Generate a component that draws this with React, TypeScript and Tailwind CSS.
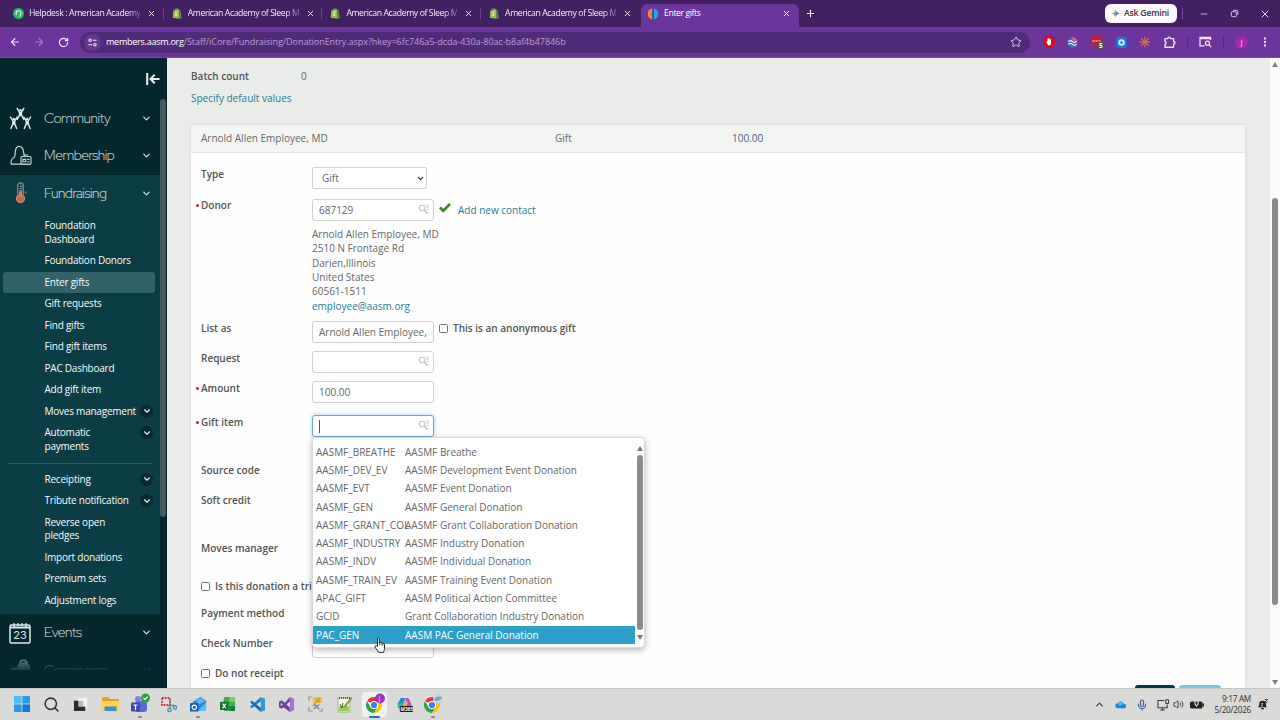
import React from "react";
import {
  ArrowLeft, ArrowRight, RotateCw, X, Plus, Minus, Star, ChevronDown, ChevronUp,
  Mic, Volume2, EllipsisVertical, Search,
} from "lucide-react";

function Shopify() {
  return (
    <svg viewBox="0 0 12 12" className="size-[11px] shrink-0">
      <path d="M1.5 2.6 7.4 1l1 10.600L.8 10.500z" fill="#95bf47" />
      <path d="M7.4 1.2 9.2 2.600l1.600 8.300-2.400.7z" fill="#5e8e3e" />
      <path d="M3.2 2.4C3.6.8 4.6.2 5.4.5c.6.2.8.9.8 1.6" fill="none" stroke="#b9d98a" strokeWidth=".7" />
      <path d="M6.2 4.300c-1.500-.7-2.600 0-2.400 1 .2.9 1.700.9 1.600 2-.1 1-1.300 1-2.200.3" fill="none" stroke="#fff" strokeWidth="1" />
    </svg>
  );
}

function TabTitle({ children }: { children: React.ReactNode }) {
  return (
    <span className="ml-[5px] w-[111px] whitespace-nowrap text-[8.700px] tracking-[-0.4px] text-[#f4edf9] [mask-image:linear-gradient(90deg,#000_88%,rgba(0,0,0,0.3))]">{children}</span>
  );
}

function Tab({ icon, title, last }: { icon: React.ReactNode; title: string; last?: boolean }) {
  return (
    <div className={last ? "flex h-[11px] w-[160px] shrink-0 items-center pl-[8px]" : "flex h-[11px] w-[158.700px] shrink-0 items-center border-r border-[#6b3f92] pl-[8px]"}>
      {icon}
      <TabTitle>{title}</TabTitle>
      <X className="ml-[7px] size-[9px] text-[#efe6f7]" strokeWidth={2.6} />
    </div>
  );
}

function TabStrip() {
  return (
    <div className="flex h-[27px] shrink-0 items-center bg-[#43205f] pl-[5px] text-[10px]">
      <Tab
        icon={
          <svg viewBox="0 0 12 12" className="size-[11px] shrink-0">
            <circle cx="6" cy="6" r="6" fill="#2eb85c" />
            <path d="M3.300 6.500V5.700a2.700 2.700 0 0 1 5.400 0v.8M3.600 5.800v1.800M8.400 5.800v1.800c0 1-1 1.300-2 1.300" fill="none" stroke="#d8ffe3" strokeWidth="1.200" />
          </svg>
        }
        title="Helpdesk : American Academy"
      />
      <Tab icon={<Shopify />} title="American Academy of Sleep M" />
      <Tab icon={<Shopify />} title="American Academy of Sleep M" />
      <Tab icon={<Shopify />} title="American Academy of Sleep M" last />
      <div className="flex h-[23px] w-[158px] shrink-0 items-center self-end rounded-t-[6px] bg-[#6b359b] pb-[4px] pl-[6px]">
        <svg viewBox="0 0 12 12" className="size-[12px]">
          <path d="M5.200.6a5.500 5.500 0 0 0 0 10.800z" fill="#f08a32" />
          <path d="M5.200.6a8 8 0 0 1 0 10.800z" fill="#c9472c" opacity=".6" />
          <path d="M6.800.6a5.500 5.500 0 0 1 0 10.800z" fill="#2aa4e0" />
          <path d="M6.800.6a8 8 0 0 0 0 10.800z" fill="#1b5fae" />
        </svg>
        <span className="ml-[5px] flex-1 text-[8.700px] tracking-[-0.42px] text-white">Enter gifts</span>
        <X className="mr-[8px] size-[9px] text-white" strokeWidth={2.6} />
      </div>
      <Plus className="ml-[6px] size-[11px] text-white" strokeWidth={2.4} />
      <div className="flex-1" />
      <div className="flex h-[19px] w-[72px] items-center rounded-[6px] bg-[#fdf9fe] pl-[6px]">
        <svg viewBox="0 0 10 10" className="size-[9px]">
          <path d="M5 0Q5.500 4.500 10 5L5 5z" fill="#ea5a4b" />
          <path d="M5 0Q5.500 4.500 10 5 5.500 5.500 5 10z" fill="#3d7ff0" />
          <path d="M5 0Q4.500 4.500 0 5h5z" fill="#e6a43a" />
          <path d="M5 10Q4.500 5.500 0 5h5z" fill="#3fae68" />
        </svg>
        <span className="ml-[4px] whitespace-nowrap text-[8.700px] font-semibold tracking-[-0.22px] text-[#3a3340]">Ask Gemini</span>
      </div>
      <div className="ml-[5px] h-[11px] w-px bg-[#7443a0]" />
      <div className="flex w-[97px] items-center">
        <Minus className="ml-[16px] size-[10px] text-[#d8c8e6]" strokeWidth={2} />
        <svg viewBox="0 0 10 10" className="ml-[21px] size-[9px]" fill="none" stroke="#d8c8e6" strokeWidth="1.100">
          <rect x="1.500" y="3" width="5.500" height="5.500" rx="1" />
          <path d="M3.500 1.500h3.800q1.300 0 1.300 1.300v3.700" />
        </svg>
        <X className="ml-[20px] size-[12px] text-[#e8dcf2]" strokeWidth={2} />
      </div>
    </div>
  );
}

function Toolbar() {
  return (
    <div className="flex h-[31px] shrink-0 items-center border-b border-[#7a45ad] bg-[#6b359b] pl-[9px]">
      <ArrowLeft className="size-[12px] text-[#f1e7f9]" strokeWidth={2.2} />
      <ArrowRight className="ml-[12px] size-[12px] text-[#a27cc6]" strokeWidth={2.2} />
      <RotateCw className="ml-[13px] size-[11px] text-[#f1e7f9]" strokeWidth={2.6} />
      <div className="ml-[11px] flex h-[21px] w-[950px] items-center rounded-[10px] bg-[#522b78] pl-[4px]">
        <span className="flex size-[17px] items-center justify-center rounded-full bg-[#63398a]">
          <svg viewBox="0 0 10 10" className="size-[9px]" fill="none" stroke="#f1e7f9" strokeWidth="1.200">
            <circle cx="2.300" cy="2.500" r="1.400" /><path d="M5.500 2.500h4M.5 7.500h4" /><circle cx="7.700" cy="7.500" r="1.400" />
          </svg>
        </span>
        <span className="ml-[5px] flex-1 whitespace-nowrap text-[9.100px] tracking-[-0.09px] text-[#b79ccf]"><span className="tracking-[-0.3px] text-white">members.aasm.org</span>/Staff/iCore/Fundraising/DonationEntry.aspx?hkey=6fc746a5-dcda-430a-80ac-b8af4b47846b</span>
        <Star className="mr-[8px] size-[12px] text-[#dccbea]" strokeWidth={2} />
      </div>
      <div className="ml-[13px] flex items-center">
        <svg viewBox="0 0 12 12" className="size-[12px]">
          <path d="M3.500 0h5L12 3.500v5L8.500 12h-5L0 8.500v-5z" fill="#cf1020" />
          <path d="M3.600 5.500c0-.7.700-.7.900 0V3c0-.6.8-.6.8 0v-.5c0-.6.9-.6.9 0V3c0-.6.9-.5.9.1v.6c0-.5.9-.5.900.100V7q0 2.300-2 2.400-1.500 0-2.500-3.900z" fill="#fff" />
        </svg>
        <svg viewBox="0 0 12 12" className="ml-[12px] size-[11px]">
          <circle cx="6" cy="6" r="5.600" fill="#4268b8" />
          <path d="M5 .5a5.600 5.600 0 0 1 6.500 4.500L7 4z" fill="#e0607a" />
          <path d="M1.500 5q2.500-2 4.500 0t4.500 0M1.500 8q2.500-2 4.500 0t4.500 0" stroke="#e8efff" strokeWidth="1.300" fill="none" />
        </svg>
        <svg viewBox="0 0 14 14" className="ml-[13px] size-[14px]">
          <rect x="0" y="1" width="11" height="10" rx="1" fill="#c3202d" />
          <path d="M1.500 6h2M4.500 6h2M7.500 6h2" stroke="#fff" strokeWidth="1.200" />
          <rect x="6.500" y="6.500" width="7" height="7.500" rx="1.500" fill="#4d5752" />
          <text x="8" y="12.800" fontSize="6.500" fill="#fff" fontWeight="700">5</text>
        </svg>
        <svg viewBox="0 0 12 12" className="ml-[11px] size-[11px]">
          <rect width="12" height="12" rx="2.500" fill="#1b74d8" />
          <circle cx="6" cy="6" r="3.600" fill="#dcebfb" /><circle cx="6" cy="6" r="1.500" fill="#1b74d8" />
        </svg>
        <svg viewBox="0 0 12 12" className="ml-[12px] size-[12px]" stroke="#cc6d50" strokeWidth="1.300">
          <path d="M6 .8v10.400M.8 6h10.400M2.200 2.200l7.600 7.600M9.800 2.200 2.200 9.800" />
        </svg>
        <svg viewBox="0 0 12 12" className="ml-[13px] size-[12px]" fill="none" stroke="#efe4f8" strokeWidth="1.400" strokeLinejoin="round">
          <path d="M1 2.600h2.700a1.300 1.300 0 0 1 2.600 0H9.600v2.900a1.300 1.300 0 0 1 0 2.600v3.100H1V8.400a1.600 1.600 0 0 0 0-3z" />
        </svg>
        <div className="ml-[11px] h-[12px] w-px bg-[#56297f]" />
        <svg viewBox="0 0 13 12" className="ml-[11px] h-[12px] w-[13px]" fill="none" stroke="#efe4f8" strokeWidth="1.300">
          <path d="M5.500 9.800H1V1.500h10.600V4M1 2.500h10" /><circle cx="8.500" cy="7.200" r="2" /><path d="m10 8.800 2.300 2.300" />
        </svg>
        <div className="ml-[11px] h-[12px] w-px bg-[#56297f]" />
        <span className="ml-[11px] flex size-[13px] items-center justify-center rounded-full bg-[#a32aa8] text-[8px] text-[#f3d4f5]">J</span>
        <EllipsisVertical className="ml-[11px] size-[12px] text-[#efe4f8]" strokeWidth={2.600} />
      </div>
    </div>
  );
}

function NavHead({ icon, label }: { icon: React.ReactNode; label: string }) {
  return (
    <div className="flex h-[37.500px] items-center pl-[8px]">
      <span className="flex w-[24px] items-center justify-center">{icon}</span>
      <span className="ml-[12px] w-[97px] font-['Red_Hat_Display','Inter',sans-serif] text-[14px] font-light tracking-[-0.45px] text-[#e3eeec]">{label}</span>
      <ChevronDown className="size-[11px] text-[#d5e4e4]" strokeWidth={2.600} />
    </div>
  );
}

function NavItem({ children, arrow, active }: { children: React.ReactNode; arrow?: boolean; active?: boolean }) {
  return (
    <div className={active ? "ml-[3px] mr-[5px] flex rounded-[3px] bg-[#33616a] py-[4px] pl-[41.500px]" : "flex py-[4px] pl-[44.500px]"}>
      <span className="w-[95.500px] whitespace-nowrap text-[10px] leading-[13.550px] tracking-[-0.23px] text-[#f8fcfc]">{children}</span>
      {arrow && (
        <span className="flex size-[13px] items-center justify-center rounded-full bg-[#062a32]">
          <ChevronDown className="size-[10px] text-[#e3eeec]" strokeWidth={2.600} />
        </span>
      )}
    </div>
  );
}

function Sidebar() {
  return (
    <aside className="flex w-[167px] shrink-0 flex-col overflow-hidden bg-[#04272e]">
      <div className="flex h-[41px] shrink-0 items-center justify-end pr-[7px]">
        <svg viewBox="0 0 14 12" className="h-[12px] w-[14px]" fill="none" stroke="#eef5f5" strokeWidth="2">
          <path d="M1.200 0v12M13.500 6H5M8.700 1.800 4.500 6l4.200 4.200" />
        </svg>
      </div>
      <div className="flex">
        <nav className="w-[160px] pt-[0.500px]">
          <NavHead label="Community" icon={
            <svg viewBox="0 0 24 24" className="size-[23px]" fill="none" stroke="#dcebeb" strokeWidth="1.500" strokeLinecap="round">
              <circle cx="12" cy="3.500" r="1.300" fill="#dcebeb" stroke="none" />
              <path d="M8.500 1.500 11 5.500v3L8.500 13M15.500 1.500 13 5.500v3l2.500 4.500M12 6v3" />
              <circle cx="5" cy="12.500" r="1.300" fill="#dcebeb" stroke="none" /><circle cx="19" cy="12.500" r="1.300" fill="#dcebeb" stroke="none" />
              <path d="M1.500 10.500 4 14.500v3L2 22.500M8.500 10.500 6 14.500v3l2 5M5 15v3M15.500 10.500l2.500 4v3l-2 5M22.500 10.500l-2.500 4v3l2 5M19 15v3" />
            </svg>} />
          <NavHead label="Membership" icon={
            <svg viewBox="0 0 24 22" className="h-[21px] w-[23px]" fill="none" stroke="#c3d6d8" strokeWidth="1.200">
              <path d="M22 20H2.500Q1 16.500 4 14 6.500 12.500 6.500 7.500 7 1.500 10.500 1.500q4 0 4.700 6 .3 2.500 1.300 4" />
              <rect x="12.500" y="12" width="10.500" height="8" rx="1" fill="#04272e" /><path d="M15 10.500h5M14.500 15h3v2.500h-3zM19 15h2.500M19 17.500h2.500" />
            </svg>} />
          <div className="bg-[#0b3d47] pb-[2.500px]">
            <NavHead label="Fundraising" icon={
              <svg viewBox="0 0 14 24" className="h-[22px] w-[13px]" fill="none">
                <path d="M4 14V4a3 3 0 0 1 6 0v10" stroke="#a9887c" strokeWidth="1.200" />
                <path d="M6 4.500h3M6 7h3M6 9.500h3" stroke="#9fb1b1" />
                <circle cx="7" cy="18" r="4.500" fill="#c0694a" stroke="#e29a7c" />
                <rect x="5.300" y="10" width="3.400" height="7" fill="#d27a58" /><path d="m11 11 2.500-1v3z" fill="#c0694a" />
              </svg>} />
            <div className="pt-[3px]">
              <NavItem>Foundation<br />Dashboard</NavItem>
              <NavItem>Foundation Donors</NavItem>
              <NavItem active>Enter gifts</NavItem>
              <NavItem>Gift requests</NavItem>
              <NavItem>Find gifts</NavItem>
              <NavItem>Find gift items</NavItem>
              <NavItem>PAC Dashboard</NavItem>
              <NavItem>Add gift item</NavItem>
              <NavItem arrow>Moves management</NavItem>
              <NavItem arrow>Automatic<br />payments</NavItem>
              <div className="mx-[8px] my-[5px] h-px bg-[#2d5c66]" />
              <NavItem arrow>Receipting</NavItem>
              <NavItem arrow>Tribute notification</NavItem>
              <NavItem>Reverse open<br />pledges</NavItem>
              <NavItem>Import donations</NavItem>
              <NavItem>Premium sets</NavItem>
              <NavItem>Adjustment logs</NavItem>
            </div>
          </div>
          <NavHead label="Events" icon={
            <svg viewBox="0 0 22 22" className="size-[22px]" fill="none" stroke="#dcebeb">
              <rect x="1" y="3" width="20" height="18" rx="1.500" strokeWidth="1.500" />
              <path d="M1 5.500h20" strokeWidth="2" /><path d="M5 1v4M9 1v3M13 1v3M17 1v4" strokeWidth="1.300" />
              <text x="4.300" y="17" fontSize="11" fill="#dcebeb" stroke="none" fontFamily="Inter">23</text>
            </svg>} />
          <div className="h-[19px] overflow-hidden opacity-50 [mask-image:linear-gradient(180deg,#000_50%,rgba(0,0,0,0.3))]">
            <NavHead label="Commerce" icon={
              <svg viewBox="0 0 24 24" className="size-[22px]" fill="#9db4b7" stroke="#c3d6d8">
                <path d="M2 11l4-2 2 2 3-6 8-2 4 5v4H2z" strokeDasharray="1 1" /><path d="M12 5c0-5 7-5 8 0" fill="none" strokeWidth="1.500" />
              </svg>} />
          </div>
        </nav>
        <div className="h-[418px] w-[6px] rounded-[3px] bg-[#435a60]" />
      </div>
    </aside>
  );
}

function Lookup() {
  return (
    <svg viewBox="0 0 12 11" className="h-[10px] w-[11px]" fill="none" stroke="#b9bcbc" strokeWidth="1.100">
      <circle cx="4.500" cy="4.500" r="3.300" /><path d="m7 7 3.800 3.500" strokeWidth="1.500" /><path d="M8.300 1.500H12M9.500 3.700H12M9.500 6H12" strokeWidth=".8" />
    </svg>
  );
}

function Field({ value, lookup, focus }: { value?: string; lookup?: boolean; focus?: boolean }) {
  return (
    <div className={focus
      ? "flex h-[22px] w-[122px] shrink-0 items-center rounded-[3px] border border-[#6ea6da] bg-white pl-[6px] shadow-[0_0_4px_#a9cdf0]"
      : "flex h-[22px] w-[122px] shrink-0 items-center rounded-[3px] border border-[#cfd2d1] bg-white pl-[6px]"}>
      {focus && <span className="h-[13px] w-px bg-[#555]" />}
      <span className="flex-1 whitespace-nowrap">{value}</span>
      {lookup && <span className="mb-[2px] pr-[4px]"><Lookup /></span>}
    </div>
  );
}

function Row({ label, required, tight, className, children }: { label: string; required?: boolean; tight?: boolean; className: string; children?: React.ReactNode }) {
  return (
    <div className={"flex items-start " + className}>
      <div className={(tight ? "h-[12px]" : "h-[14px]") + " flex w-[116px] shrink-0 items-center whitespace-nowrap font-semibold text-[#505453]"}>
        <span className="w-[5px]">{required && <span className="block size-[3px] rounded-full bg-[#c8203e]" />}</span>{label}
      </div>
      {children}
    </div>
  );
}

function Check({ label, className }: { label: string; className: string }) {
  return (
    <div className={"flex items-center whitespace-nowrap font-semibold text-[#505453] " + className}>
      <span className="size-[9px] shrink-0 rounded-[1.500px] border border-[#6f7272] bg-white" />
      <span className="ml-[5px]">{label}</span>
    </div>
  );
}

const items = [
  ["AASMF_BREATHE", "AASMF Breathe"],
  ["AASMF_DEV_EV", "AASMF Development Event Donation"],
  ["AASMF_EVT", "AASMF Event Donation"],
  ["AASMF_GEN", "AASMF General Donation"],
  ["AASMF_GRANT_COL", "AASMF Grant Collaboration Donation"],
  ["AASMF_INDUSTRY", "AASMF Industry Donation"],
  ["AASMF_INDV", "AASMF Individual Donation"],
  ["AASMF_TRAIN_EV", "AASMF Training Event Donation"],
  ["APAC_GIFT", "AASM Political Action Committee"],
  ["GCID", "Grant Collaboration Industry Donation"],
  ["PAC_GEN", "AASM PAC General Donation"],
];

function Menu() {
  return (
    <div className="absolute left-0 top-[22px] z-10 flex h-[211px] w-[333px] rounded-[4px] border border-[#d9dbda] bg-white pt-[5px] shadow-[0_2px_6px_rgba(0,0,0,0.3)]">
      <div className="w-[322px]">
        {items.map(([code, name], i) => (
          <div key={code} className={i === 10 ? "flex h-[18.300px] items-center whitespace-nowrap bg-[#2d9fc9] pl-[3px] text-white" : "flex h-[18.300px] items-center whitespace-nowrap pl-[3px]"}>
            <span className="w-[89px] shrink-0">{code}</span>
            <span>{name}</span>
          </div>
        ))}
      </div>
      <div className="flex h-[202px] w-[9px] flex-col items-center pt-[3px]">
        <span className="border-x-[3px] border-b-[5px] border-x-transparent border-b-[#777]" />
        <span className="mt-[4px] h-[175px] w-[6px] rounded-full bg-[#8b8b8b]" />
        <span className="mt-[5px] border-x-[3px] border-t-[5px] border-x-transparent border-t-[#777]" />
      </div>
      <svg viewBox="0 0 12 16" className="absolute left-[61px] top-[199px] h-[16px] w-[12px]" fill="#fff" stroke="#222" strokeWidth="1" strokeLinejoin="round">
        <path d="M3.500 9.500V1.800c0-1.300 1.800-1.300 1.800 0V6c.3-.8 1.700-.7 1.800.3.500-.7 1.600-.4 1.700.5.600-.5 1.700-.1 1.700.9v3.600c0 2-.8 2.500-.9 4H4.500c0-1.300-2.300-3-3.500-5.300-.5-1.200.9-1.800 1.600-1z" />
        <path d="M5.300 6v2.500M7.100 6.500v2M8.800 7v1.800" strokeWidth=".7" />
      </svg>
    </div>
  );
}

function Form() {
  return (
    <main className="flex min-w-0 flex-1 flex-col overflow-hidden bg-[#eaecea] pl-[24px] text-[10px] text-[#646867]">
      <div className="flex h-[22px] w-full shrink-0 items-center pt-[14px]">
        <span className="w-[110px] font-semibold text-[#505453]">Batch count</span><span>0</span>
      </div>
      <div className="mt-[10px] flex h-[16px] shrink-0 items-center text-[#2b7a94]">Specify default values</div>
      <div className="mt-[19px] flex min-h-0 w-[1054px] flex-1 flex-col bg-[#fefefe] shadow-[0_0_4px_#d5d8d6]">
        <div className="flex h-[28px] shrink-0 items-center border-b border-[#e2e4e2] bg-[#f3f5f3] pl-[10px]">
          <span className="w-[354px]">Arnold Allen Employee, MD</span>
          <span className="w-[177px]">Gift</span>
          <span className="text-[#4d5f8a]">100.00</span>
        </div>
        <div className="pl-[5px] pt-[15px]">
          <Row label="Type" className="h-[31px]" tight>
            <div className="-mt-[1px] flex h-[22px] w-[115px] items-center justify-between rounded-[2px] border border-[#cfd2d1] bg-white pl-[9px] pr-[1px]">
              <span>Gift</span><ChevronDown className="size-[9px] text-[#333]" strokeWidth={3.500} />
            </div>
          </Row>
          <Row label="Donor" required tight className="h-[122px]">
            <div>
              <div className="flex items-center">
                <Field value="687129" lookup />
                <svg viewBox="0 0 12 10" className="mb-[4px] ml-[5px] h-[10px] w-[12px]"><path d="M0 5.500 2 3.500 4.300 5.800 10 0l2 1.800-7.700 8z" fill="#43852f" /></svg>
                <span className="ml-[7px] text-[#2b7a94]">Add new contact</span>
              </div>
              <div className="pt-[6px] leading-[14.350px]">
                <div>Arnold Allen Employee, MD</div><div>2510 N Frontage Rd</div><div>Darien,Illinois</div><div>United States</div><div>60561-1511</div>
                <div className="text-[#2b7a94]">employee@aasm.org</div>
              </div>
            </div>
          </Row>
          <Row label="List as" className="h-[30px]">
            <Field value="Arnold Allen Employee," />
            <Check label="This is an anonymous gift" className="ml-[5px] h-[14px]" />
          </Row>
          <Row label="Request" className="h-[30px]"><Field lookup /></Row>
          <Row label="Amount" required className="h-[34px]"><Field value="100.00" /></Row>
          <Row label="Gift item" required className="h-[48px]">
            <div className="relative"><Field lookup focus /><Menu /></div>
          </Row>
          <Row label="Source code" className="h-[30px]" />
          <Row label="Soft credit" className="h-[48px]" />
          <Row label="Moves manager" className="h-[38px]" />
          <Check label="Is this donation a tri" className="mb-[13px] ml-[5px] h-[14px]" />
          <Row label="Payment method" className="h-[30px]" />
          <Row label="Check Number" className="h-[30px]"><Field /></Row>
          <Check label="Do not receipt" className="ml-[5px] h-[14px]" />
          <div className="mt-[5px] flex gap-[4px] pl-[939px]">
            <div className="h-[20px] w-[40px] rounded-[3px] bg-[#06373f]" />
            <div className="h-[20px] w-[42px] rounded-[3px] bg-[#76cbe4]" />
          </div>
        </div>
      </div>
    </main>
  );
}

function Cell({ children, active, mark }: { children: React.ReactNode; active?: boolean; mark?: boolean }) {
  return (
    <div className="flex h-[32px] w-[29.400px] shrink-0 flex-col items-center pt-[3px]">
      <span className={active ? "flex h-[25px] w-[25px] items-center justify-center rounded-[3px] bg-[#f1f0f1]" : "flex h-[25px] w-[25px] items-center justify-center"}>{children}</span>
      {active && <span className="-mt-[1px] h-[2px] w-[11px] rounded-full bg-[#1f6fc4]" />}
      {mark && <span className="-mt-[1px] h-[2px] w-[4px] rounded-full bg-[#83838a]" />}
    </div>
  );
}

function Chrome({ badge }: { badge: React.ReactNode }) {
  return (
    <svg viewBox="0 0 22 22" className="size-[22px]">
      <circle cx="10" cy="12" r="8" fill="#fff" />
      <path d="M10 12 3.070 8A8 8 0 0 1 16.930 8H10z" fill="#e33b2e" />
      <path d="M10 8h6.930A8 8 0 0 1 10 20l3.500-6z" fill="#f9c313" />
      <path d="M3.070 8A8 8 0 0 0 10 20l3.500-6H6.500z" fill="#2ba24c" />
      <circle cx="10" cy="12" r="4" fill="#fff" /><circle cx="10" cy="12" r="3.100" fill="#3b7ded" />
      {badge}
    </svg>
  );
}

function Taskbar() {
  return (
    <footer className="flex h-[32px] shrink-0 items-center border-t border-[#c6c7c4] bg-[#dadbd8] pl-[7.300px]">
      <Cell><svg viewBox="0 0 16 16" className="size-[16px]"><path d="M0 0h7.600v7.600H0z" fill="#48c0f5" /><path d="M8.400 0H16v7.600H8.400zM0 8.400h7.600V16H0z" fill="#249be6" /><path d="M8.400 8.400H16V16H8.400z" fill="#0f7dd3" /></svg></Cell>
      <Cell><Search className="size-[17px] text-[#303030]" strokeWidth={2.200} /></Cell>
      <Cell><svg viewBox="0 0 16 16" className="size-[15px]"><path d="M5 1h10v10H5z" fill="#f3f3f3" /><path d="M1 4h5v6h7v5H1z" fill="#2b2b2b" /><path d="M6 4h5v6H6z" fill="#b8b8b8" /></svg></Cell>
      <Cell><svg viewBox="0 0 17 16" className="h-[16px] w-[17px]"><path d="M0 2q0-1 1-1h5l2 2h8q1 0 1 1v10H0z" fill="#e3a11c" /><path d="M0 5h17v9q0 1-1 1H1q-1 0-1-1z" fill="#fcd355" /><path d="M2.500 10.500h12V15h-12z" fill="#3d8ccf" /></svg></Cell>
      <Cell mark><svg viewBox="0 0 20 22" className="h-[22px] w-[20px]"><circle cx="8" cy="6" r="3" fill="#7b83eb" /><rect x="5" y="8" width="12" height="11" rx="3" fill="#6068d6" /><rect x="1" y="9.500" width="9" height="9" rx="1" fill="#4048b0" /><path d="M3.500 12h4M5.500 12v5" stroke="#fff" strokeWidth="1.200" /><circle cx="15.500" cy="5" r="4.500" fill="#21a63b" /><path d="m13.500 5 1.500 1.500 2.700-2.800" fill="none" stroke="#fff" strokeWidth="1.100" /></svg></Cell>
      <Cell><svg viewBox="0 0 17 17" className="size-[17px]" fill="none"><path d="M2 2h8v7H2z" stroke="#c9303a" strokeWidth="1.800" strokeDasharray="1.800 1" /><path d="M10 3v9.500M7 9.500h8" stroke="#708392" strokeWidth="1.300" /><circle cx="9.500" cy="14" r="1.700" stroke="#4b8dad" strokeWidth="1.300" /><circle cx="15" cy="11.500" r="1.600" stroke="#4b8dad" strokeWidth="1.300" /></svg></Cell>
      <Cell mark><svg viewBox="0 0 18 18" className="size-[17px]"><path d="M3 6 11 1l6 4v9q0 2-2 2H5q-2 0-2-2z" fill="#2a86df" /><path d="m6 5 5-3 5 3-6 4z" fill="#63b6f5" /><path d="m17 7-9 9h7q2 0 2-2z" fill="#54c0f5" /><rect x="0" y="7.500" width="9" height="9" rx="1" fill="#1260ad" /><circle cx="4.500" cy="12" r="2.300" fill="none" stroke="#fff" strokeWidth="1.200" /></svg></Cell>
      <Cell><svg viewBox="0 0 17 17" className="size-[16px]"><rect x="4" y="1" width="12" height="15" rx="1.500" fill="#3bab4d" /><path d="M10 1h4.500q1.500 0 1.500 1.500V6h-6z" fill="#80cf55" /><path d="M10 11h6v3.500q0 1.500-1.500 1.500H10z" fill="#167a38" /><rect x="0" y="6" width="9" height="9" rx="1" fill="#13702f" /><path d="m2.700 8 3.600 5M6.300 8l-3.600 5" stroke="#fff" strokeWidth="1.300" /></svg></Cell>
      <Cell><svg viewBox="0 0 18 18" className="size-[17px]"><path d="m12.500 1 4.500 2v12l-4.500 2z" fill="#3099dc" /><path d="M12.500 1v4.500L3 13 1 11.500z" fill="#1782c6" /><path d="M12.500 17v-4.500L3 5 1 6.500z" fill="#1270b0" /></svg></Cell>
      <Cell><svg viewBox="0 0 18 18" className="size-[17px]"><path d="m12.500 1 4.500 2v12l-4.500 2z" fill="#a274df" /><path d="M12.500 1v5L4 13.500 1 12V6l3-1.500L12.500 12v5L4.500 10.800z" fill="#70429f" /><path d="M3 7.200v3.600L5 9z" fill="#dadbd8" /><path d="M12.500 6v6L9 9z" fill="#dadbd8" /></svg></Cell>
      <Cell><svg viewBox="0 0 16 17" className="h-[16px] w-[15px]"><path d="M1 5V1h3M1 12v4h4M12 16h3v-3" fill="none" stroke="#8f9495" strokeWidth="1.200" /><path d="M5 1h10v6H8L5 9z" fill="#f0c53d" /><path d="m8 3 5 4M13 2 5 11" stroke="#c99618" strokeWidth="1.500" /><path d="m7 9 5 5M12 9l-6 5" stroke="#8a7aad" strokeWidth="1.500" /></svg></Cell>
      <Cell><svg viewBox="0 0 16 17" className="h-[17px] w-[16px]"><rect x="1" y="2" width="12" height="14" fill="#f3f8e8" stroke="#a3ad98" /><path d="M2 10h10v5H2z" fill="#97cf47" /><path d="m3 8 2 4 1-5" stroke="#455b31" fill="none" /><path d="m6 11 8-10 1.500 1.500L8 12z" fill="#8a9a5c" /><path d="M2 2h11" stroke="#555" strokeDasharray="1 1" strokeWidth="2" /></svg></Cell>
      <Cell active><Chrome badge={<><circle cx="16" cy="5.500" r="5" fill="#9c36b5" /><text x="14.500" y="8" fontSize="7" fill="#f3d4f5">J</text></>} /></Cell>
      <Cell><svg viewBox="0 0 18 18" className="size-[17px]"><path d="M2 8 5 2h5L7 12H3z" fill="#2589d8" /><path d="M10 2h2q2 0 3 4l2 5h-6z" fill="#b952d1" /><path d="M2 8h5l-1 5H3q-2 0-1-5z" fill="#35b7a8" /><path d="M8 6h5l-2 5H7z" fill="#f3a64c" /><rect x="4" y="10.500" width="14" height="6.500" rx="1" fill="#1d1d1f" /><text x="4.700" y="15.900" fontSize="5" fill="#fff" fontWeight="700">M365</text></svg></Cell>
      <Cell mark><Chrome badge={<><circle cx="16" cy="5.500" r="5" fill="#c3d6e2" /><path d="M12 7q2-5 8-3-1 4-6 4" fill="#81a3bb" /></>} /></Cell>
      <div className="flex-1" />
      <ChevronUp className="size-[11px] text-[#333]" strokeWidth={2.400} />
      <svg viewBox="0 0 14 10" className="ml-[10px] h-[9px] w-[12px]"><path d="M3.500 9.500a3 3 0 0 1-.3-6A4 4 0 0 1 10.500 4 2.800 2.800 0 0 1 11 9.500z" fill="#1689e0" /><path d="M3.200 3.500A4 4 0 0 1 10.500 4L5 7z" fill="#47b8f4" /></svg>
      <Mic className="ml-[9px] size-[12px] text-[#3b5b9d]" strokeWidth={2.200} />
      <svg viewBox="0 0 13 13" className="ml-[9px] size-[12px]" fill="none" stroke="#333" strokeWidth="1.100"><path d="M8 1.500H1v8h10V6M3.500 12h5M6 9.500V12" /><rect x="9.500" y=".8" width="3" height="4" rx=".8" /></svg>
      <Volume2 className="ml-[4px] size-[11px] text-[#333]" strokeWidth={2} />
      <svg viewBox="0 0 14 9" className="ml-[6px] h-[9px] w-[14px]"><rect x="0" y="1.500" width="12.500" height="7" rx="1.500" fill="#222" /><rect x="12.500" y="3.500" width="1.500" height="3" fill="#222" /><path d="M5 0v4l1.500 2L8 4V0" fill="none" stroke="#dadbd8" strokeWidth="1.200" /></svg>
      <div className="ml-[10px] flex w-[37px] flex-col items-end whitespace-nowrap text-[8.200px] leading-[10.500px] tracking-[-0.25px] text-[#2b2b2b]"><span>9:17 AM</span><span>5/20/2026</span></div>
      <svg viewBox="0 0 12 12" className="ml-[6px] mr-[12px] size-[11px]"><path d="M1 9q1.500-1.500 1.500-4 0-3 3.500-3t3.500 3q0 2.500 1.500 4z" fill="#222" /><path d="M4.500 10.500h3" stroke="#222" strokeWidth="1.500" /><path d="M4.500 5h2l-2 2.500h2" fill="none" stroke="#dadbd8" strokeWidth=".9" /><path d="M8.500.5h3l-3 3h3" fill="none" stroke="#222" strokeWidth=".9" /></svg>
    </footer>
  );
}

export default function App() {
  return (
    <div className="flex h-[720px] w-[1280px] flex-col overflow-hidden font-['Open_Sans','Noto_Sans',sans-serif]">
      <TabStrip />
      <Toolbar />
      <div className="flex min-h-0 flex-1">
        <Sidebar />
        <Form />
        <div className="flex w-[10px] shrink-0 flex-col items-center bg-[#fbfbfb] pt-[4px]">
          <span className="border-x-[3px] border-b-[5px] border-x-transparent border-b-[#7d7d7d]" />
          <span className="mt-[131px] h-[407px] w-[6px] rounded-full bg-[#8b8b8b]" />
          <span className="mt-[75px] border-x-[3px] border-t-[5px] border-x-transparent border-t-[#7d7d7d]" />
        </div>
      </div>
      <Taskbar />
    </div>
  );
}
